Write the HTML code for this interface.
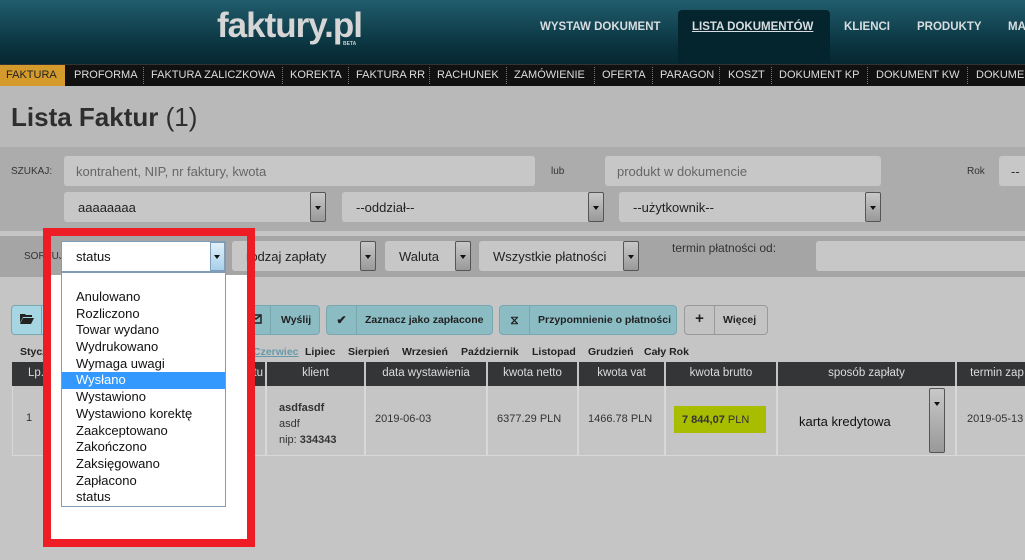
<!DOCTYPE html>
<html><head><meta charset="utf-8">
<style>
*{margin:0;padding:0;box-sizing:border-box}
body{width:1025px;height:560px;overflow:hidden;position:relative;background:#c5c5c5;font-family:"Liberation Sans",sans-serif;color:#222}
.a{position:absolute;white-space:nowrap}
#hdr{left:0;top:0;width:1025px;height:64px;background:linear-gradient(#215d6d,#0a3440 70%,#062832)}
#logo{left:217px;top:6px;font-size:35px;font-weight:bold;color:#d6d6d6;letter-spacing:-1px}
.tm{top:21px;font-size:11.5px;font-weight:bold;color:#d8dde0}
#act{left:678px;top:10px;width:152px;height:54px;background:#05252e;border-radius:4px 4px 0 0}
#nav{left:0;top:64px;width:1025px;height:22px;background:#111;border-top:1px solid #333}
.ni{top:69px;font-size:11px;color:#ddd}
.sep{top:67px;height:17px;border-left:1px dotted #777}
#fak{left:0;top:65px;width:65px;height:21px;background:#d49a2c;color:#222;font-size:11px;padding:4px 0 0 6px}
#top{left:0;top:86px;width:1025px;height:61px;background:#b9b9b9}
h1{position:absolute;left:11px;top:102px;font-size:26px;font-weight:bold;color:#2e2e2e}
h1 span{font-weight:normal}
#srch{left:0;top:147px;width:1025px;height:84px;background:#acacac}
.inp{background:#c7c7c7;border-radius:3px;height:30px;font-size:13px;color:#666;padding:8px 0 0 12px}
.sel{background:#c7c7c7;border-radius:3px;height:30px;font-size:13px;color:#222;padding:8px 0 0 14px}
.arr{position:absolute;right:0;top:0;width:16px;height:30px;background:linear-gradient(#c8c8c8,#999);border:1px solid #555;border-radius:2px}
.arr:after{content:"";position:absolute;left:4px;top:13px;border:3px solid transparent;border-top:4px solid #111}
#sort{left:0;top:236px;width:1025px;height:41px;background:#a5a5a5}
.btn{top:305px;height:30px;background:#8bbcc4;border:1px solid #79a7ae;border-radius:4px;font-size:10.5px;font-weight:bold;color:#222}
.btn i{position:absolute;left:0;top:0;width:30px;height:28px;border-right:1px solid #79a7ae;font-style:normal;text-align:center;padding-top:7px;font-size:12px}
.btn b{position:absolute;top:8px}
.mon{top:346px;font-size:10.5px;font-weight:bold;color:#222}
.th{top:362px;height:24px;background:#333537;color:#ddd;font-size:11.5px;text-align:center;padding-top:5px}
.td{top:386px;height:70px;border-right:2px solid #d8d8d8;font-size:11px;color:#333}
#red{left:43px;top:228px;width:212px;height:319px;border:8px solid #ee1c25}
#wh{left:51px;top:275px;width:196px;height:264px;background:#fff}
#dd{left:61px;top:272px;width:165px;height:235px;background:#fff;border:1px solid #7f9db9;font-size:13px;color:#111}
#dd div{height:16.7px;padding-left:14px;line-height:16.7px}
#dd .h{background:#3399ff;color:#fff}
</style></head><body>
<div class="a" id="hdr"></div>
<div class="a" id="act"></div>
<div class="a" id="logo">faktury.pl</div>
<div class="a" style="left:343px;top:41px;font-size:5px;font-weight:bold;color:#ccc">BETA</div>
<div class="a tm" style="left:540px">WYSTAW DOKUMENT</div>
<div class="a tm" style="left:692px;text-decoration:underline">LISTA DOKUMENTÓW</div>
<div class="a tm" style="left:844px">KLIENCI</div>
<div class="a tm" style="left:917px">PRODUKTY</div>
<div class="a tm" style="left:1008px">MA</div>
<div class="a" id="nav"></div>
<div class="a" id="fak">FAKTURA</div>
<div class="a ni" style="left:74px">PROFORMA</div><div class="a sep" style="left:143px"></div>
<div class="a ni" style="left:151px">FAKTURA ZALICZKOWA</div><div class="a sep" style="left:282px"></div>
<div class="a ni" style="left:290px">KOREKTA</div><div class="a sep" style="left:348px"></div>
<div class="a ni" style="left:356px">FAKTURA RR</div><div class="a sep" style="left:429px"></div>
<div class="a ni" style="left:437px">RACHUNEK</div><div class="a sep" style="left:506px"></div>
<div class="a ni" style="left:514px">ZAMÓWIENIE</div><div class="a sep" style="left:594px"></div>
<div class="a ni" style="left:602px">OFERTA</div><div class="a sep" style="left:652px"></div>
<div class="a ni" style="left:660px">PARAGON</div><div class="a sep" style="left:719px"></div>
<div class="a ni" style="left:728px">KOSZT</div><div class="a sep" style="left:771px"></div>
<div class="a ni" style="left:779px">DOKUMENT KP</div><div class="a sep" style="left:867px"></div>
<div class="a ni" style="left:876px">DOKUMENT KW</div><div class="a sep" style="left:967px"></div>
<div class="a ni" style="left:976px">DOKUME</div>
<div class="a" id="top"></div>
<h1>Lista Faktur <span>(1)</span></h1>
<div class="a" id="srch"></div>
<div class="a" style="left:11px;top:166px;font-size:10px;color:#333">SZUKAJ:</div>
<div class="a inp" style="left:64px;top:156px;width:471px">kontrahent, NIP, nr faktury, kwota</div>
<div class="a" style="left:551px;top:166px;font-size:10px;color:#333">lub</div>
<div class="a inp" style="left:605px;top:156px;width:276px">produkt w dokumencie</div>
<div class="a" style="left:967px;top:166px;font-size:10px;color:#333">Rok</div>
<div class="a inp" style="left:999px;top:156px;width:40px;color:#333">--</div>
<div class="a sel" style="left:64px;top:192px;width:262px">aaaaaaaa<div class="arr"></div></div>
<div class="a sel" style="left:342px;top:192px;width:262px">--oddział--<div class="arr"></div></div>
<div class="a sel" style="left:619px;top:192px;width:262px">--użytkownik--<div class="arr"></div></div>
<div class="a" id="sort"></div>
<div class="a" style="left:24px;top:251px;font-size:10px;color:#333">SORTUJ:</div>
<div class="a sel" style="left:232px;top:241px;width:144px">rodzaj zapłaty<div class="arr"></div></div>
<div class="a sel" style="left:385px;top:241px;width:86px">Waluta<div class="arr"></div></div>
<div class="a sel" style="left:479px;top:241px;width:160px">Wszystkie płatności<div class="arr"></div></div>
<div class="a" style="left:672px;top:241px;font-size:12px;color:#333">termin płatności od:</div>
<div class="a inp" style="left:816px;top:241px;width:220px"></div>
<div class="a btn" style="left:11px;width:225px;background:#a6d6e2"><i><svg width="14" height="11" viewBox="0 0 14 11"><path d="M0 1h5l1 1h6v2H3L0 10z M3 5h11l-3 6H0z" fill="#222"/></svg></i></div>
<div class="a btn" style="left:240px;width:80px"><i><svg width="12" height="10" viewBox="0 0 12 10"><rect x="1" y="1" width="10" height="8" fill="none" stroke="#222" stroke-width="1.5"/><path d="M1 1l5 4 5-4" fill="none" stroke="#222" stroke-width="1.5"/></svg></i><b style="left:40px">Wyślij</b></div>
<div class="a btn" style="left:326px;width:167px"><i>✔</i><b style="left:38px">Zaznacz jako zapłacone</b></div>
<div class="a btn" style="left:499px;width:178px"><i>⧖</i><b style="left:38px">Przypomnienie o płatności</b></div>
<div class="a btn" style="left:684px;width:84px;background:#c3c3c3;border-color:#999"><i style="border-color:#999;font-size:15px;padding-top:4px">+</i><b style="left:38px">Więcej</b></div>
<div class="a mon" style="left:20px">Styczeń</div>
<div class="a mon" style="left:225px">aj</div>
<div class="a mon" style="left:253px;color:#69a;text-decoration:underline">Czerwiec</div>
<div class="a mon" style="left:305px">Lipiec</div>
<div class="a mon" style="left:348px">Sierpień</div>
<div class="a mon" style="left:402px">Wrzesień</div>
<div class="a mon" style="left:461px">Październik</div>
<div class="a mon" style="left:532px">Listopad</div>
<div class="a mon" style="left:588px">Grudzień</div>
<div class="a mon" style="left:644px">Cały Rok</div>
<div class="a th" style="left:12px;width:48px">Lp.</div>
<div class="a th" style="left:62px;width:203px;text-align:right;padding-right:2px">dokumentu</div>
<div class="a th" style="left:267px;width:97px">klient</div>
<div class="a th" style="left:366px;width:120px">data wystawienia</div>
<div class="a th" style="left:488px;width:89px">kwota netto</div>
<div class="a th" style="left:579px;width:85px">kwota vat</div>
<div class="a th" style="left:666px;width:110px">kwota brutto</div>
<div class="a th" style="left:778px;width:177px">sposób zapłaty</div>
<div class="a th" style="left:957px;width:80px">termin zap</div>
<div class="a" style="left:12px;top:386px;width:1013px;height:70px;border-left:1px solid #d8d8d8;border-bottom:1px solid #d8d8d8"></div>
<div class="a td" style="left:12px;width:50px;padding:26px 0 0 14px">1</div>
<div class="a td" style="left:62px;width:205px"><svg style="position:absolute;left:160px;top:27px" width="18" height="12" viewBox="0 0 18 12"><path d="M1 6Q9-3 17 6Q9 15 1 6z" fill="#2ea7bf"/><circle cx="9" cy="6" r="3" fill="#c5c5c5"/><circle cx="9" cy="6" r="1.6" fill="#2ea7bf"/></svg></div>
<div class="a td" style="left:267px;width:99px;padding:14px 0 0 12px;line-height:16px"><b>asdfasdf</b><br>asdf<br>nip: <b>334343</b></div>
<div class="a td" style="left:366px;width:122px;padding:27px 0 0 9px">2019-06-03</div>
<div class="a td" style="left:488px;width:91px;padding:27px 0 0 9px">6377.29 PLN</div>
<div class="a td" style="left:579px;width:87px;padding:27px 0 0 9px">1466.78 PLN</div>
<div class="a td" style="left:666px;width:112px"><div class="a" style="left:8px;top:20px;width:92px;height:27px;background:#a8bd00;padding:8px 0 0 8px;font-size:11px"><b>7 844,07</b> PLN</div></div>
<div class="a td" style="left:778px;width:179px"><div class="a" style="left:21px;top:28px;font-size:13px;color:#111">karta kredytowa</div><div class="arr" style="right:10px;top:2px;height:65px;width:16px"><span></span></div></div>
<div class="a td" style="left:957px;width:68px;padding:27px 0 0 10px;border-right:none">2019-05-13</div>
<div class="a" id="red"></div>
<div class="a" id="wh"></div>
<div class="a" style="left:61px;top:241px;width:165px;height:31px;background:#fff;border:1px solid #7f9db9;font-size:13px;padding:7px 0 0 14px;color:#111">status<div style="position:absolute;right:0;top:0;width:15px;height:29px;background:linear-gradient(#e0f0fa,#a8d0ea);border:1px solid #7f9db9"><div style="position:absolute;left:3px;top:12px;border:3px solid transparent;border-top:4px solid #111"></div></div></div>
<div class="a" id="dd"><div style="height:16px"></div><div>Anulowano</div><div>Rozliczono</div><div>Towar wydano</div><div>Wydrukowano</div><div>Wymaga uwagi</div><div class="h">Wysłano</div><div>Wystawiono</div><div>Wystawiono korektę</div><div>Zaakceptowano</div><div>Zakończono</div><div>Zaksięgowano</div><div>Zapłacono</div><div>status</div></div>
</body></html>
